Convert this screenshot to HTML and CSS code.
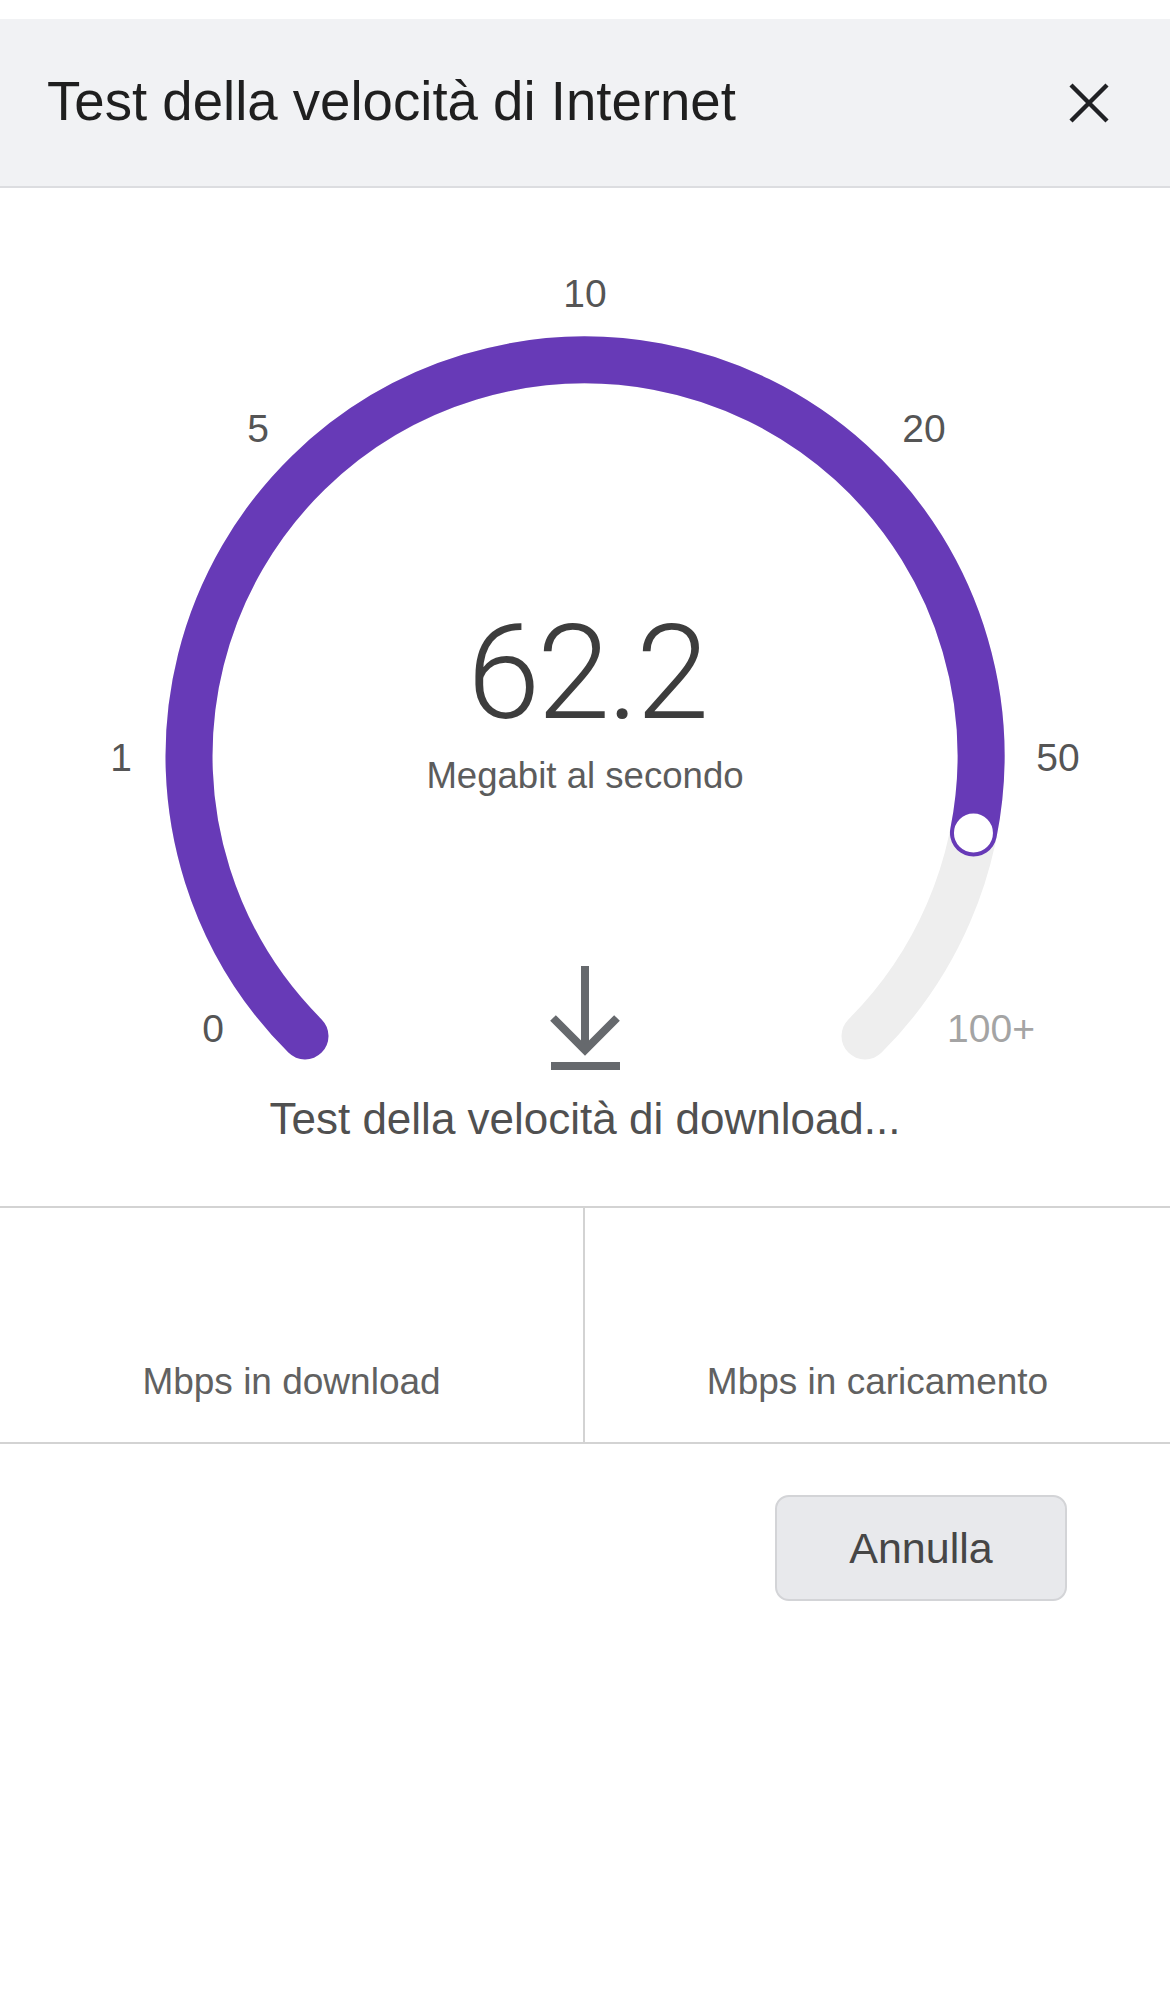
FILE: index.html
```html
<!DOCTYPE html>
<html lang="it">
<head>
<meta charset="utf-8">
<title>Test della velocità di Internet</title>
<link rel="stylesheet" href="styles.css">
</head>
<body>
<div class="top-gap"></div>
<header class="header">
  <h1 class="title">Test della velocità di Internet</h1>
  <button class="close" aria-label="Chiudi">
    <svg width="42" height="42" viewBox="0 0 42 42"><path d="M3 3 L39 39 M39 3 L3 39" stroke="#202124" stroke-width="4.4" fill="none"/></svg>
  </button>
</header>
<section class="gauge">
  <svg class="dial" width="1170" height="1018" viewBox="0 0 1170 1018">
    <path class="track" d="M 305 848 A 396 396 0 1 1 865 848"/>
    <path class="progress" d="M 305 848 A 396 396 0 1 1 973.46 644.92"/>
    <circle class="knob" cx="973.46" cy="644.92" r="21"/>
  </svg>
  <span class="tick t0">0</span>
  <span class="tick t1">1</span>
  <span class="tick t5">5</span>
  <span class="tick t10">10</span>
  <span class="tick t20">20</span>
  <span class="tick t50">50</span>
  <span class="tick t100 muted">100+</span>
  <div class="value">62.2</div>
  <div class="unit">Megabit al secondo</div>
  <svg class="dl-icon" width="76" height="104" viewBox="0 0 76 104">
    <path d="M38 0 V84" stroke="#66696d" stroke-width="8" fill="none"/>
    <path d="M6 52 L38 84 L70 52" stroke="#66696d" stroke-width="8" fill="none" stroke-linejoin="miter"/>
    <rect x="4" y="96" width="69" height="8" fill="#66696d"/>
  </svg>
  <div class="status">Test della velocità di download...</div>
</section>
<section class="stats">
  <div class="stat stat-left"><span class="stat-label">Mbps in download</span></div>
  <div class="stat"><span class="stat-label">Mbps in caricamento</span></div>
</section>
<div class="actions">
  <button class="cancel">Annulla</button>
</div>
</body>
</html>
```
FILE: styles.css
```css
* { box-sizing: border-box; }
html, body {
  margin: 0;
  padding: 0;
  background: #ffffff;
  font-family: "Liberation Sans", Arial, sans-serif;
}
body { width: 1170px; min-height: 1992px; }

.top-gap { height: 19px; background: #ffffff; }

.header {
  height: 169px;
  background: #f1f2f4;
  border-bottom: 2px solid #dcdde0;
  display: flex;
  align-items: center;
  justify-content: space-between;
  padding: 0 60px 0 47px;
}
.title {
  margin: 0;
  font-size: 54.6px;
  font-weight: normal;
  line-height: 1;
  color: #1f1f1f;
}
.close {
  border: 0;
  padding: 0;
  background: transparent;
  width: 42px;
  height: 42px;
  display: block;
}
.close svg { display: block; }

.gauge {
  position: relative;
  height: 1020px;
  padding-top: 420px;
  border-bottom: 2px solid #d3d3d3;
  display: flex;
  flex-direction: column;
  align-items: center;
}
.dial {
  position: absolute;
  left: 0;
  top: 0;
}
.track, .progress {
  fill: none;
  stroke-width: 47;
  stroke-linecap: round;
}
.track { stroke: #eeeeee; }
.progress { stroke: #673ab7; }
.knob { fill: #ffffff; stroke: #673ab7; stroke-width: 3; }

.tick {
  position: absolute;
  font-size: 39px;
  line-height: 1;
  color: #555555;
  transform: translate(-50%, -50%);
  white-space: nowrap;
}
.tick.muted { color: #a4a4a4; }
.t0 { left: 213px; top: 840px; }
.t1 { left: 121px; top: 569px; }
.t5 { left: 258px; top: 240px; }
.t10 { left: 585px; top: 105px; }
.t20 { left: 924px; top: 240px; }
.t50 { left: 1058px; top: 569px; }
.t100 { left: 991px; top: 840px; }

.value {
  position: relative;
  font-family: Roboto, "Liberation Sans", sans-serif;
  font-weight: 300;
  font-size: 132px;
  line-height: 131px;
  letter-spacing: -3px;
  color: #3d3d3d;
  height: 131px;
  margin-left: 3px;
}
.unit {
  position: relative;
  margin-top: 18.5px;
  font-size: 36.6px;
  line-height: 36px;
  color: #5c5c5c;
}
.dl-icon {
  position: relative;
  display: block;
  margin-top: 172.5px;
}
.status {
  margin-top: 27px;
  font-size: 44px;
  line-height: 44px;
  color: #505050;
}

.stats {
  display: grid;
  grid-template-columns: 1fr 1fr;
  height: 236px;
  border-bottom: 2px solid #d3d3d3;
}
.stat {
  display: flex;
  align-items: flex-end;
  justify-content: center;
  padding-bottom: 42px;
}
.stat-left { border-right: 2px solid #d3d3d3; }
.stat-label {
  font-size: 37px;
  line-height: 37px;
  color: #616161;
}

.actions {
  display: flex;
  justify-content: flex-end;
  padding: 51px 103px 0 0;
}
.cancel {
  width: 292px;
  height: 106px;
  border: 2px solid #d3d4d7;
  border-radius: 14px;
  background: #e8e9ec;
  font-family: "Liberation Sans", Arial, sans-serif;
  font-size: 43px;
  color: #464646;
  padding: 0;
}
```
